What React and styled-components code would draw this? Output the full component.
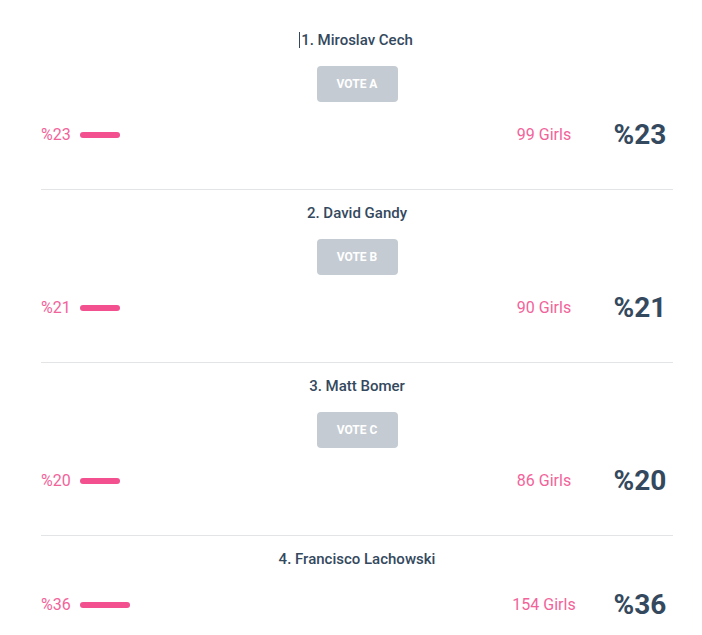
import React from "react";
import styled, { createGlobalStyle } from "styled-components";

const Global = createGlobalStyle`
  html, body { margin: 0; padding: 0; background: #ffffff; }
  body { font-family: Roboto, "Liberation Sans", Arial, sans-serif; }
  * { box-sizing: border-box; }
`;

const Poll = styled.div`
  width: 632px;
  margin: 0 0 0 41px;
  padding-top: 17px;
`;

const Item = styled.section`
  padding: 13px 0 41px;
  border-bottom: ${(p) => (p.$last ? "none" : "1px solid #e2e4e6")};
  display: flex;
  flex-direction: column;
  align-items: center;
`;

const Title = styled.h3`
  margin: 0 0 ${(p) => (p.$tight ? "16px" : "19px")};
  font-size: 15px;
  line-height: 20px;
  font-weight: 500;
  color: #34495e;
  position: relative;
`;

const Caret = styled.span`
  position: absolute;
  left: -2px;
  top: 2px;
  width: 1px;
  height: 16px;
  background: #34495e;
`;

const VoteButton = styled.button`
  width: 81px;
  height: 36px;
  margin-bottom: 16px;
  border: none;
  border-radius: 4px;
  background: #c5cbd2;
  color: #ffffff;
  font-family: Roboto, "Liberation Sans", Arial, sans-serif;
  font-size: 12px;
  font-weight: 700;
  text-transform: uppercase;
  cursor: pointer;
`;

const Row = styled.div`
  width: 100%;
  height: 30px;
  display: grid;
  grid-template-columns: 1fr 88px 66px;
  column-gap: 19px;
  align-items: center;
`;

const Left = styled.div`
  display: flex;
  align-items: center;
  gap: 9px;
`;

const SmallPercent = styled.span`
  font-size: 16px;
  color: #f2639a;
`;

const Bar = styled.span`
  display: block;
  height: 6px;
  border-radius: 3px;
  background: #f2508f;
`;

const Count = styled.span`
  font-size: 16px;
  color: #f2639a;
  text-align: center;
`;

const BigPercent = styled.span`
  font-size: 28px;
  font-weight: 700;
  color: #34495e;
  text-align: center;
`;

const candidates = [
  { name: "1. Miroslav Cech", vote: "Vote A", pct: 23, girls: 99, bar: 40 },
  { name: "2. David Gandy", vote: "Vote B", pct: 21, girls: 90, bar: 40 },
  { name: "3. Matt Bomer", vote: "Vote C", pct: 20, girls: 86, bar: 40 },
  { name: "4. Francisco Lachowski", vote: null, pct: 36, girls: 154, bar: 50 },
];

export default function App() {
  return (
    <>
      <Global />
      <Poll>
        {candidates.map((c, i) => (
          <Item key={c.name} $last={i === candidates.length - 1}>
            <Title $tight={!!c.vote}>
              {i === 0 && <Caret />}
              {c.name}
            </Title>
            {c.vote && <VoteButton>{c.vote}</VoteButton>}
            <Row>
              <Left>
                <SmallPercent>%{c.pct}</SmallPercent>
                <Bar style={{ width: c.bar }} />
              </Left>
              <Count>{c.girls} Girls</Count>
              <BigPercent>%{c.pct}</BigPercent>
            </Row>
          </Item>
        ))}
      </Poll>
    </>
  );
}
